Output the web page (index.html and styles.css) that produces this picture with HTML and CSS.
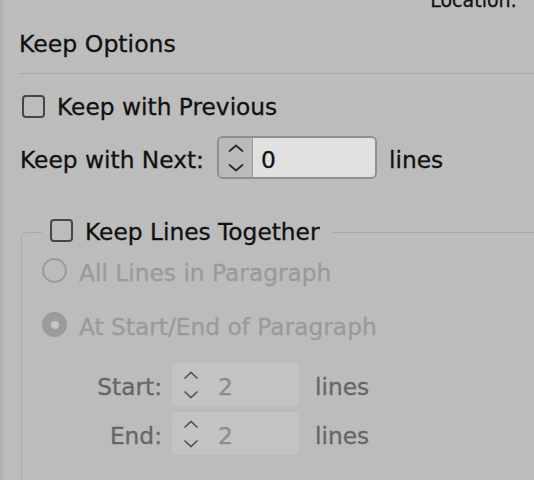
FILE: index.html
```html
<!DOCTYPE html>
<html>
<head>
<meta charset="utf-8">
<link rel="stylesheet" href="styles.css">
</head>
<body>
<div class="panel">
  <div class="loc">Location:</div>
  <div class="heading">Keep Options</div>
  <div class="sep"></div>
  <div class="row prev-row">
    <span class="check"></span>
    <span class="txt">Keep with Previous</span>
  </div>
  <div class="row next-row">
    <span class="txt next-label">Keep with Next:</span>
    <div class="spin">
      <div class="stepper">
        <svg width="18" height="28" viewBox="0 0 18 28"><path d="M2 7.5 L9 1.5 L16 7.5 M2 20.5 L9 26.5 L16 20.5" fill="none" stroke="#2b2b2b" stroke-width="1.8"/></svg>
      </div>
      <div class="field">0</div>
    </div>
    <span class="txt unit">lines</span>
  </div>
  <fieldset class="group">
    <legend class="legend">
      <span class="check"></span>
      <span class="txt">Keep Lines Together</span>
    </legend>
    <div class="radio-row first">
      <span class="radio"></span>
      <span class="txt dis">All Lines in Paragraph</span>
    </div>
    <div class="radio-row second">
      <span class="radio on"></span>
      <span class="txt dis">At Start/End of Paragraph</span>
    </div>
    <div class="sub-row start">
      <span class="txt sub-label">Start:</span>
      <div class="dspin">
        <div class="dstepper">
          <svg width="18" height="28" viewBox="0 0 18 28"><path d="M2.5 7.5 L9 1.5 L15.5 7.5 M2.5 20.5 L9 26.5 L15.5 20.5" fill="none" stroke="#555" stroke-width="1.7"/></svg>
        </div>
        <div class="dfield">2</div>
      </div>
      <span class="txt sub-unit">lines</span>
    </div>
    <div class="sub-row end">
      <span class="txt sub-label">End:</span>
      <div class="dspin">
        <div class="dstepper">
          <svg width="18" height="28" viewBox="0 0 18 28"><path d="M2.5 7.5 L9 1.5 L15.5 7.5 M2.5 20.5 L9 26.5 L15.5 20.5" fill="none" stroke="#555" stroke-width="1.7"/></svg>
        </div>
        <div class="dfield">2</div>
      </div>
      <span class="txt sub-unit">lines</span>
    </div>
  </fieldset>
</div>
</body>
</html>
```
FILE: styles.css
```css
html, body {
  margin: 0;
  padding: 0;
  background: #bcbcbc;
}
body {
  font-family: "DejaVu Sans", "Liberation Sans", sans-serif;
  font-size: 23.3px;
  color: #111;
  -webkit-text-stroke: 0.3px currentColor;
}
.panel {
  width: 534px;
  height: 480px;
  overflow: hidden;
  display: flex;
  flex-direction: column;
  box-shadow: inset 3px 0 0 #b1b1b1;
}
.loc {
  margin-top: -10px;
  height: 20px;
  font-size: 19px;
  line-height: 20px;
  text-align: right;
  padding-right: 17px;
  flex: none;
}
.heading {
  margin-top: 20px;
  padding-left: 19px;
  font-size: 23.6px;
  line-height: 28px;
  height: 28px;
  flex: none;
}
.sep {
  margin-top: 15px;
  margin-left: 20px;
  height: 1px;
  background: #a7a7a7;
  flex: none;
}
.txt {
  line-height: 28px;
  white-space: nowrap;
}
.row {
  display: flex;
  align-items: flex-start;
  flex: none;
}
.prev-row {
  margin-top: 19px;
  height: 28px;
  padding-left: 22px;
}
.check {
  width: 19px;
  height: 19px;
  border: 2px solid #464646;
  border-radius: 4px;
  flex: none;
}
.prev-row .check {
  margin-top: 2px;
}
.prev-row .txt {
  margin-left: 12px;
}
.next-row {
  margin-top: 15px;
  height: 43px;
  padding-left: 20px;
}
.next-label {
  width: 197px;
  margin-top: 10px;
}
.spin {
  width: 156px;
  height: 39px;
  border: 2px solid #8f8f8f;
  border-radius: 6px;
  display: flex;
  overflow: hidden;
  flex: none;
}
.stepper {
  width: 33px;
  border-right: 1.5px solid #999;
  display: flex;
  align-items: center;
  justify-content: center;
  background: #bababa;
}
.field {
  flex: 1;
  background: #e1e1e1;
  padding-left: 8px;
  padding-top: 8px;
  line-height: 28px;
}
.unit {
  margin-left: 12px;
  margin-top: 10px;
}
.group {
  margin: 39px -20px 0 21px;
  padding: 0 0 0 20px;
  border: 1px solid #a9a9a9;
  border-radius: 5px;
  min-width: 0;
  height: 400px;
  flex: none;
}
.legend {
  display: flex;
  align-items: flex-start;
  padding: 0 12px 0 8px;
  margin: 0;
  height: 28px;
}
.legend .check {
  margin-top: 1px;
}
.legend .txt {
  margin-left: 12px;
}
.radio-row {
  display: flex;
  align-items: flex-start;
}
.radio-row.first {
  margin-top: 12px;
}
.radio-row.second {
  margin-top: 25px;
}
.radio {
  width: 21px;
  height: 21px;
  border: 2px solid #9b9b9b;
  border-radius: 50%;
  flex: none;
  display: flex;
  align-items: center;
  justify-content: center;
}
.radio.on {
  background: #9c9c9c;
}
.radio.on::after {
  content: "";
  width: 8px;
  height: 8px;
  border-radius: 50%;
  background: #c6c6c6;
}
.radio-row .txt {
  margin-left: 12px;
  margin-top: 1px;
}
.dis {
  color: #9a9a9a;
}
.sub-row {
  display: flex;
  align-items: flex-start;
  height: 43px;
}
.sub-row.start {
  margin-top: 22px;
}
.sub-row.end {
  margin-top: 6px;
}
.sub-label {
  width: 120px;
  text-align: right;
  margin-top: 10px;
  color: #666;
}
.dspin {
  margin-left: 10px;
  width: 127px;
  height: 43px;
  border-radius: 5px;
  background: #c3c3c3;
  display: flex;
  flex: none;
}
.dstepper {
  width: 38px;
  display: flex;
  align-items: center;
  justify-content: center;
}
.dfield {
  padding-left: 8px;
  padding-top: 10px;
  line-height: 28px;
  color: #8c8c8c;
}
.sub-unit {
  margin-left: 16px;
  margin-top: 10px;
  color: #666;
}
```
